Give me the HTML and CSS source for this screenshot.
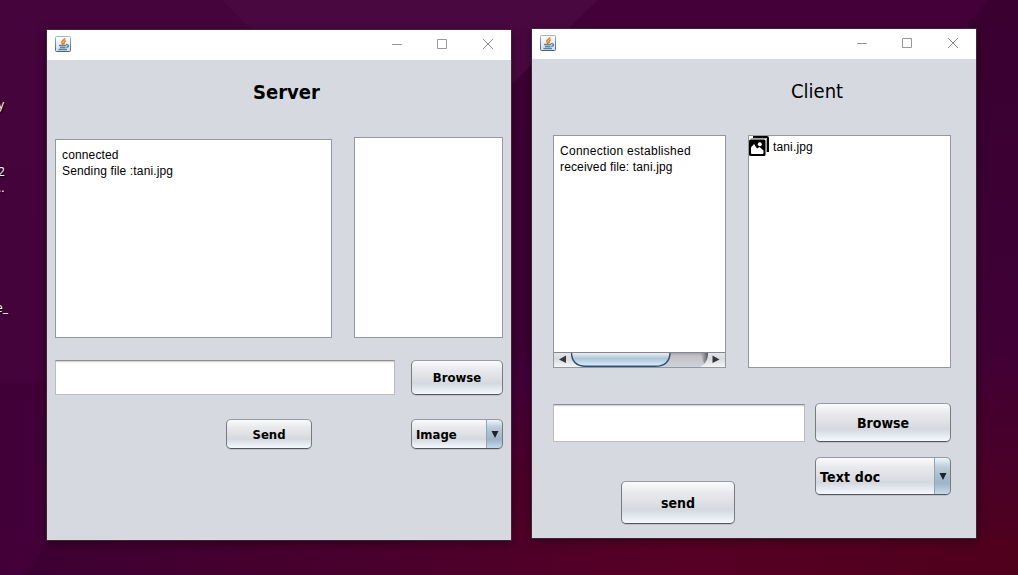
FILE: index.html
```html
<!DOCTYPE html>
<html lang="en">
<head>
<meta charset="utf-8">
<title>Server and Client</title>
<link rel="stylesheet" href="styles.css">
</head>
<body>
<svg width="0" height="0" class="defs" aria-hidden="true">
  <defs>
    <linearGradient id="javaBg" x1="0" y1="0" x2="0" y2="1">
      <stop offset="0" stop-color="#ffffff"/><stop offset="1" stop-color="#d3dde6"/>
    </linearGradient>
    <linearGradient id="javaEdge" x1="0" y1="0" x2="0" y2="1">
      <stop offset="0" stop-color="#9fb6ca"/><stop offset="1" stop-color="#44647f"/>
    </linearGradient>
    <symbol id="java" viewBox="0 0 16 16">
      <rect x=".5" y=".5" width="15" height="15" rx="1" fill="url(#javaBg)" stroke="url(#javaEdge)"/>
      <path d="M10 2.300C9.500 4 6 5 6.800 6.800L8.200 8.800M10.700 4.500C8.800 5.500 8.500 6.300 9.200 8.300" fill="none" stroke="#ea7f1c" stroke-width="1.500"/>
      <path d="M4 9.500h7M5 11.500h5.500M3.500 13.500h8.500" fill="none" stroke="#5f84a4" stroke-width="1.300"/>
      <path d="M11 8.700c3.200-.5 3.200 2.500.2 2.700" fill="none" stroke="#5f84a4" stroke-width="1.400"/>
    </symbol>
    <symbol id="controls" viewBox="0 0 104 12">
      <path d="M0 6.500h10M45.500 1.500h9v9h-9z" fill="none" stroke="#999"/>
      <path d="M91 1l10 10M101 1l-10 10" fill="none" stroke="#8a8a8a" stroke-width="1"/>
    </symbol>
  </defs>
</svg>
<main class="desktop">
  <svg class="wallpaper" viewBox="0 0 1018 575" aria-hidden="true">
    <defs>
      <linearGradient id="wall" x1="0" y1="0" x2="0" y2="1">
        <stop offset="0" stop-color="#46043c"/><stop offset=".66" stop-color="#45033b"/><stop offset=".67" stop-color="#400037"/><stop offset="1" stop-color="#430038"/>
      </linearGradient>
      <linearGradient id="floor" x1="0" y1="0" x2="1" y2="0">
        <stop offset="0" stop-color="#3d0033"/><stop offset=".35" stop-color="#49002c"/><stop offset=".65" stop-color="#560025"/><stop offset="1" stop-color="#4f001b"/>
      </linearGradient>
      <linearGradient id="gap" x1="0" y1="0" x2="0" y2="1">
        <stop offset="0" stop-color="#3d0033"/><stop offset=".55" stop-color="#3d0033"/><stop offset=".62" stop-color="#42003a"/><stop offset=".8" stop-color="#4b0029"/><stop offset="1" stop-color="#560025"/>
      </linearGradient>
      <linearGradient id="side" x1="0" y1="0" x2="0" y2="1">
        <stop offset="0" stop-color="#3a0030"/><stop offset=".52" stop-color="#3e0035"/><stop offset=".6" stop-color="#400035"/><stop offset=".78" stop-color="#48002a"/><stop offset="1" stop-color="#50001a"/>
      </linearGradient>
    </defs>
    <path d="M0 0h1018v575H0z" fill="url(#wall)"/>
    <path d="M222 0h376L511 86v20H325z" fill="#4a0840"/>
    <path d="M598 0h391L950 40v60H505V92z" fill="#430039"/>
    <path d="M532 64L505 92v483h30z" fill="url(#gap)"/>
    <path d="M989 0h29v575h-50V22z" fill="url(#side)"/>
    <path d="M50 539h968v36H25z" fill="url(#floor)"/>
  </svg>
  <span class="shortcut shortcut-a">y</span>
  <span class="shortcut shortcut-b">2<br>..</span>
  <span class="shortcut shortcut-c">e_</span>

  <section class="window server">
    <header class="titlebar">
      <svg class="java"><use href="#java"/></svg>
      <svg class="controls"><use href="#controls"/></svg>
    </header>
    <h1 class="heading">Server</h1>
    <div class="panes">
      <div class="pane log"><p class="line">connected</p><p class="line">Sending file :tani.jpg</p></div>
      <div class="pane files"></div>
    </div>
    <div class="row">
      <div class="field"></div>
      <div class="button browse"><span>Browse</span></div>
    </div>
    <div class="row actions">
      <div class="button send"><span>Send</span></div>
      <div class="button combo"><span>Image</span><i class="drop"><svg viewBox="0 0 8 7"><path d="M.5 0h7L4 7z"/></svg></i></div>
    </div>
  </section>

  <section class="window client">
    <header class="titlebar">
      <svg class="java"><use href="#java"/></svg>
      <svg class="controls"><use href="#controls"/></svg>
    </header>
    <h1 class="heading">Client</h1>
    <div class="panes">
      <div class="pane log">
        <p class="line wide">Connection established</p><p class="line">received file: tani.jpg</p>
        <svg class="scrollbar" viewBox="0 0 171 15">
          <defs>
            <linearGradient id="track" x1="0" y1="0" x2="0" y2="1"><stop offset="0" stop-color="#9b9ca1"/><stop offset=".25" stop-color="#c0c1c7"/><stop offset="1" stop-color="#d0d2d9"/></linearGradient>
            <linearGradient id="thumb" x1="0" y1="0" x2="0" y2="1"><stop offset="0" stop-color="#f2f7fb"/><stop offset=".3" stop-color="#c7d7e3"/><stop offset=".45" stop-color="#b0c5d6"/><stop offset="1" stop-color="#d9f0ff"/></linearGradient>
            <linearGradient id="cap" x1="0" y1="0" x2="0" y2="1"><stop offset="0" stop-color="#e6e7ea"/><stop offset=".45" stop-color="#d9dadf"/><stop offset="1" stop-color="#f4f5f7"/></linearGradient>
            <linearGradient id="capShade" x1="0" y1="0" x2="1" y2="0"><stop offset="0" stop-color="#888" stop-opacity="0"/><stop offset="1" stop-color="#4c4d50"/></linearGradient>
          </defs>
          <path d="M0 0h171v15H0z" fill="url(#track)"/>
          <path d="M0 0h17c0 8 3 13 11 15H0z" fill="url(#cap)"/>
          <path d="M171 0h-17c0 8-3 13-8 15h25z" fill="url(#cap)"/>
          <path d="M146 0h8c0 6-1.500 9-4 12z" fill="url(#capShade)"/>
          <path d="M17.500 0C17.500 9 22 14.300 32 14.300h69c10 0 15-5.300 15-14.300z" fill="url(#thumb)" stroke="#2f5271" stroke-width="1.400"/>
          <path d="M0 .5h171" stroke="#85868c"/>
          <path d="M12 3.500v7.500L5 7.500zM158.500 3.500v7.500l7-3.500z" fill="#35363a"/>
        </svg>
      </div>
      <div class="pane files">
        <svg class="picture" viewBox="0 0 20 20">
          <path d="M4 0h14q2 0 2 2v14h-2V2H4z" fill="#000"/>
          <path d="M2 2.500h15.500V16" fill="none" stroke="#aaa"/>
          <rect y="3.500" width="16.500" height="16.500" rx="1.500" fill="#000"/>
          <path d="M2 17V11.500l3-3.500 3 4.500 2.500-1.500 4 3.500V17q0 1-1 1H3q-1 0-1-1z" fill="#fff"/>
          <circle cx="10.800" cy="8.300" r="2" fill="#fff"/>
        </svg>
        <span class="filename">tani.jpg</span>
      </div>
    </div>
    <div class="row">
      <div class="lower-left">
        <div class="field"></div>
        <div class="button send"><span>send</span></div>
      </div>
      <div class="lower-right">
        <div class="button browse"><span>Browse</span></div>
        <div class="button combo"><span>Text doc</span><i class="drop"><svg viewBox="0 0 8 7"><path d="M.5 0h7L4 7z"/></svg></i></div>
      </div>
    </div>
  </section>
</main>
</body>
</html>
```
FILE: styles.css
```css
* { box-sizing: border-box; }
body { margin: 0; overflow: hidden; }
.defs { position: absolute; }
.desktop { position: relative; width: 1018px; height: 575px; overflow: hidden; background: #43023a; }
.wallpaper { display: block; width: 1018px; height: 575px; }
.shortcut { position: absolute; color: #fff; font: 12px/16px "Open Sans", sans-serif; text-shadow: 1px 1px 2px #000; }
.shortcut-a { left: -2px; top: 97px; }
.shortcut-b { left: -2px; top: 164px; }
.shortcut-c { left: -4px; top: 300px; }

.window { position: absolute; background: #d6d9e0; font-family: "Liberation Sans", Arial, sans-serif; color: #000; box-shadow: 0 0 0 1px #442039, 0 2px 9px 1px rgba(0, 0, 0, .4); }
.server { left: 47px; top: 30px; width: 464px; height: 510px; }
.client { left: 532px; top: 29px; width: 444px; height: 509px; }
.titlebar { display: flex; justify-content: space-between; height: 30px; padding: 6px 15px 0 8px; background: #fff; }
.java { width: 16px; height: 16px; }
.controls { width: 104px; height: 12px; margin-top: 2px; }
.heading { margin: 0; font: 20px/26px "DejaVu Sans Condensed", "DejaVu Sans", sans-serif; white-space: nowrap; }
.panes, .row { display: flex; }
.pane { border: 1px solid #9297a1; background: #fff; }
.line { margin: 0; font-size: 12px; line-height: 16px; letter-spacing: .14px; white-space: nowrap; }
.field { background: #fff; border: 1px solid #bbbcbe; border-top-color: #8d8e92; box-shadow: inset 0 1px #d6d6d8, inset 0 2px #f3f3f3; }

.button { display: flex; align-items: center; justify-content: center; border: 1px solid #7a7d83; border-color: #989ba2 #777a80 #53565c; border-radius: 5px; background: linear-gradient(#fafbfc, #e9eaee 25%, #dfe1e4 48%, #d5d8df 68%, #e3e7ee 83%, #f6f9fe); box-shadow: 0 1px #bfc2c8; font: bold 13px/18px "DejaVu Sans Condensed", "DejaVu Sans", sans-serif; white-space: nowrap; }
.combo { justify-content: space-between; padding-left: 4px; overflow: hidden; }
.drop { display: flex; align-items: center; justify-content: center; align-self: stretch; width: 17px; margin: -1px -1px -1px 0; border: 1px solid #436783; border-left-color: #8ca6ba; border-radius: 0 5px 5px 0; background: linear-gradient(#f0f5f9, #bdcdda 25%, #a8bdce 50%, #9fb4c7 70%, #c3dbec); }
.drop svg { width: 8px; height: 7px; fill: #1d2227; }

.server .heading { padding: 19px 0 0 206px; font-weight: bold; height: 77px; }
.server .panes { align-items: flex-end; gap: 22px; padding-left: 8px; height: 201px; }
.server .log { width: 277px; height: 199px; padding: 7px 6px; }
.server .files { width: 149px; height: 201px; }
.server .row { gap: 16px; margin-top: 22px; padding-left: 8px; }
.server .field { width: 340px; height: 35px; }
.server .browse { width: 92px; height: 35px; }
.server .actions { gap: 99px; margin-top: 24px; padding-left: 179px; }
.server .send { width: 86px; height: 30px; padding-top: 1px; }
.server .combo { width: 92px; height: 30px; }
.server .combo span { padding-top: 1px; }

.client .heading { padding: 19px 0 0 259px; font-weight: normal; height: 76px; }
.client .panes { gap: 22px; padding-left: 21px; height: 233px; }
.client .log { display: flex; flex-direction: column; width: 173px; padding: 7px 0 0; }
.client .line { padding-left: 6px; }
.client .wide { letter-spacing: .28px; }
.client .scrollbar { width: 171px; height: 15px; margin-top: auto; }
.client .files { display: flex; align-items: flex-start; gap: 4px; width: 203px; }
.picture { width: 20px; height: 20px; }
.filename { font-size: 12px; line-height: 22px; letter-spacing: .14px; }
.client .row { gap: 10px; padding: 35px 0 0 21px; }
.lower-left { display: flex; flex-direction: column; width: 252px; padding-top: 1px; }
.client .field { height: 38px; }
.client .send { width: 114px; height: 43px; margin: 39px 0 0 68px; }
.lower-right { display: flex; flex-direction: column; gap: 15px; width: 136px; }
.client .browse { height: 39px; }
.client .combo { height: 38px; }
.client .combo span { padding-top: 2px; letter-spacing: .2px; }
.client .button { font-size: 14px; }
```
